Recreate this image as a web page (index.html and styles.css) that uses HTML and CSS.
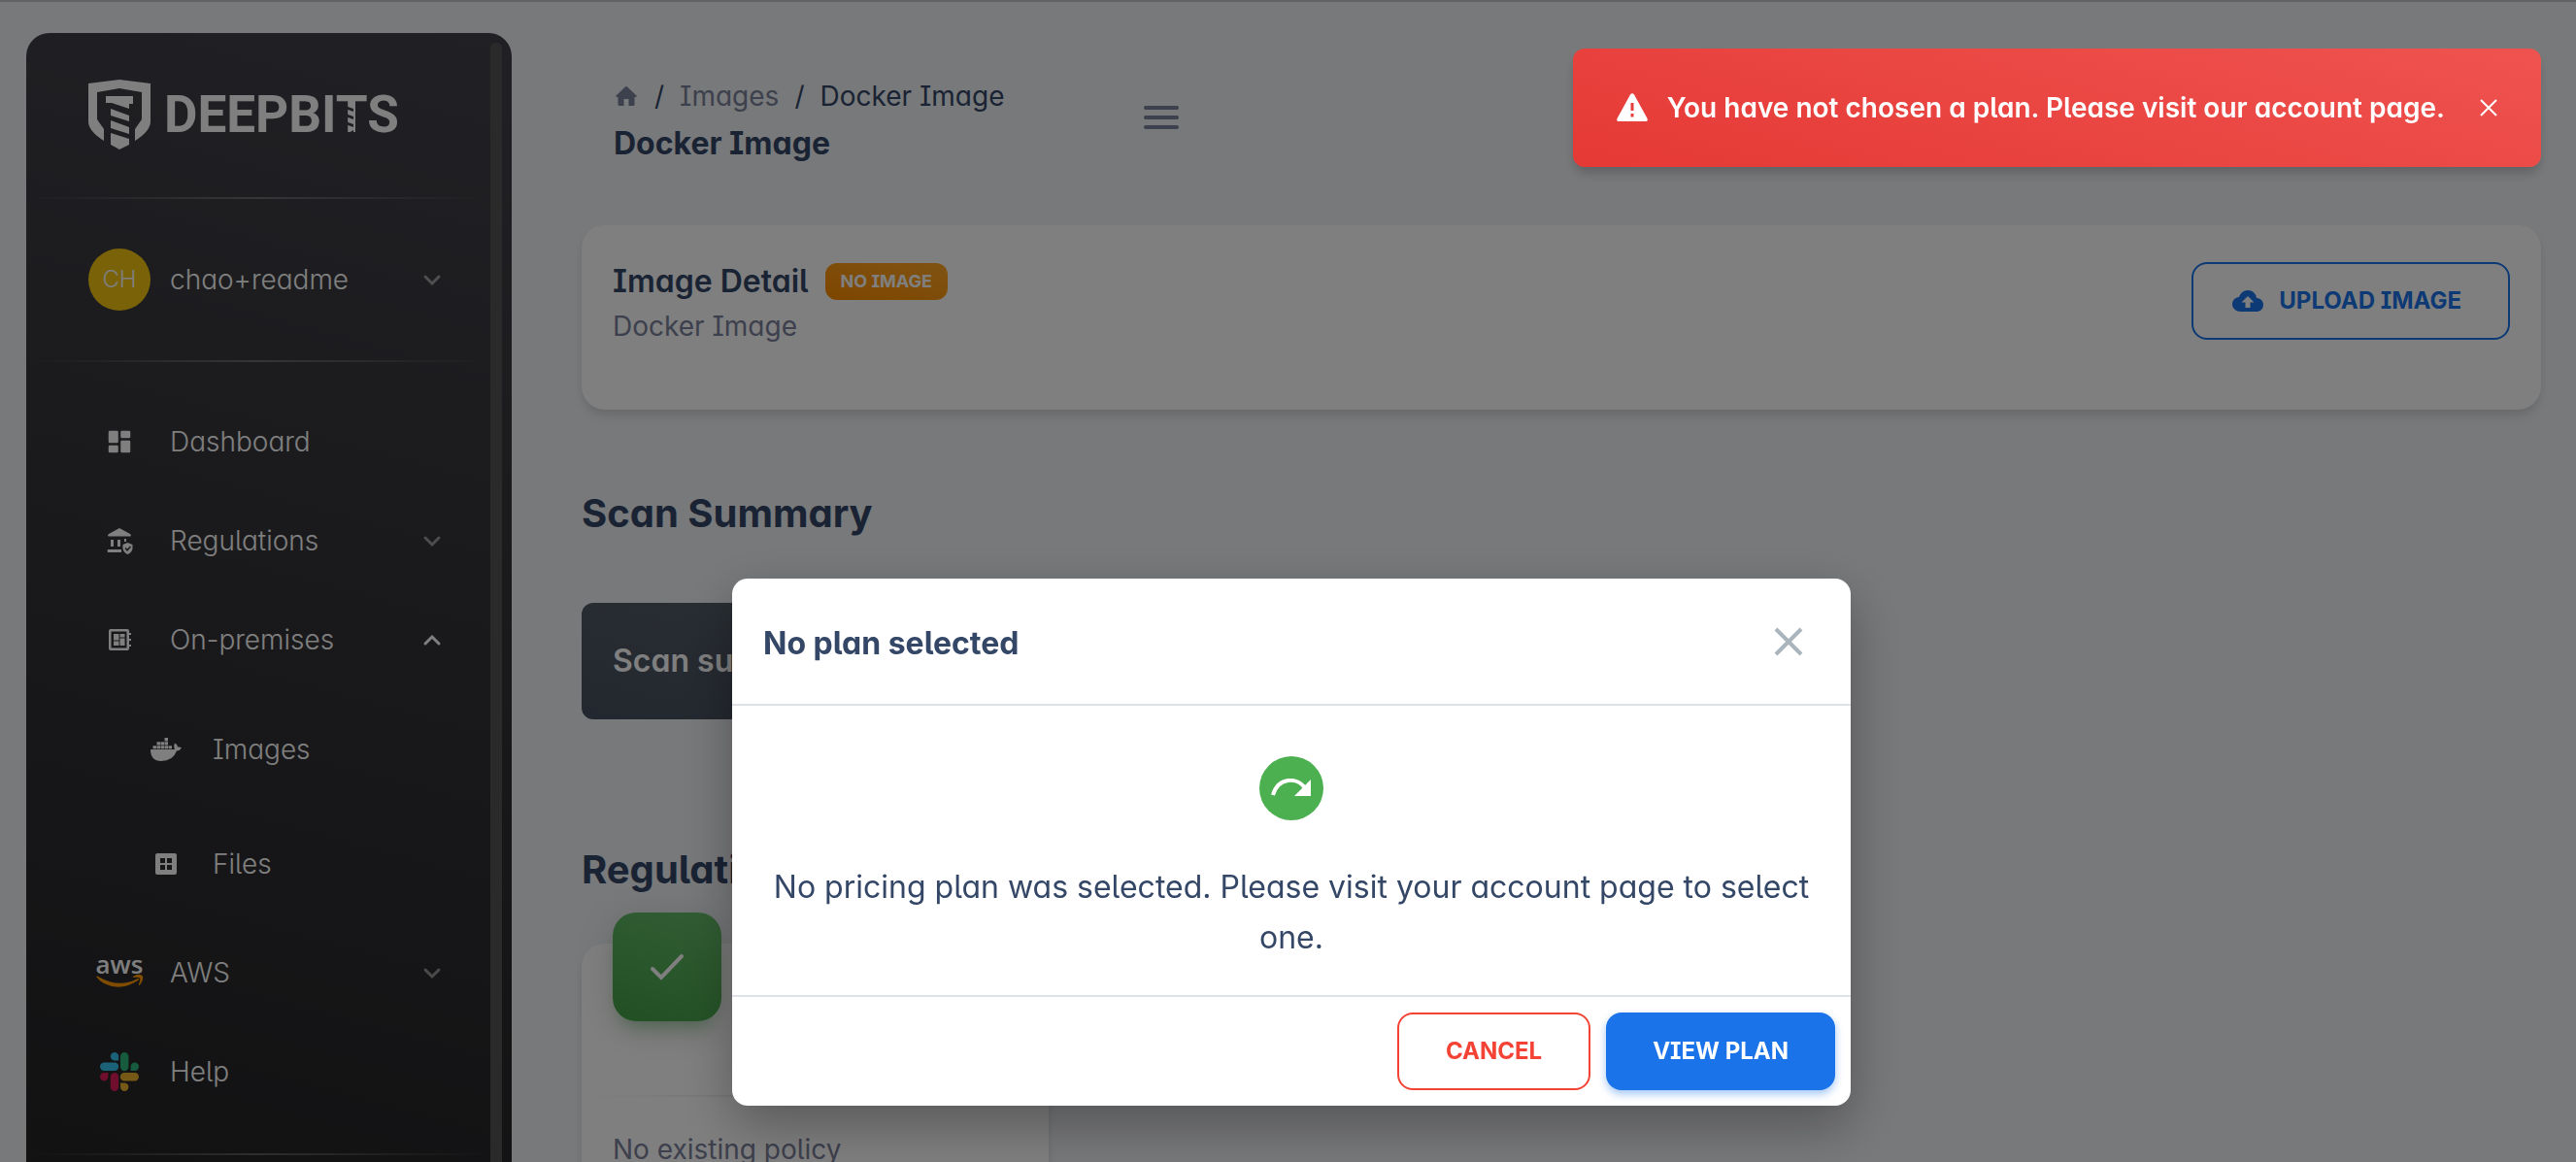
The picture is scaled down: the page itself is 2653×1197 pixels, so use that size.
FILE: index.html
```html
<!DOCTYPE html>
<html lang="en">
    <head>
        <meta charset="utf-8">
        <title>Docker Image</title>
        <link rel="stylesheet" href="styles.css">
    </head>
    <body>
        <aside class="sidebar">
            <div class="sidebar-content">
                <div class="brand">
                    <svg class="brand-shield" viewBox="0 0 64 72">
                        <path d="M32 0 64 4V43Q64 53 48 63V51L55 41V13L32 9 9 13V41L16 51V63Q0 53 0 43V4Z"/>
                        <path d="M18 17H46V25H42V30L24 24H18Z M23 30 42 37V43L23 37Z M23 42 42 49V56L23 50Z M23 55 42 61V67L32 72 23 67Z"/>
                    </svg>
                    <div class="brand-name">DEEPBITS
                        <svg class="brand-screw" viewBox="0 0 14 32">
                            <path d="M0 0 14 5V8L0 3Z M0 8 14 13V16L0 11Z M0 16 14 21V24L0 19Z M0 27 7 31 14 27V32H0Z"/>
                        </svg>
                    </div>
                </div>
                <hr>
                <button class="nav-item user">
                    <span class="avatar">CH</span>
                    <span class="nav-text">chao+readme</span>
                    <svg class="chevron" viewBox="0 0 24 24"><path d="M5 9 12 16 19 9"/></svg>
                </button>
                <hr>
                <nav class="menu">
                    <a class="nav-item" href="#">
                        <span class="nav-icon"><svg width="30" height="30" viewBox="0 0 24 24"><path d="M4 13h6a1 1 0 0 0 1-1V4a1 1 0 0 0-1-1H4a1 1 0 0 0-1 1v8a1 1 0 0 0 1 1zm0 8h6a1 1 0 0 0 1-1v-4a1 1 0 0 0-1-1H4a1 1 0 0 0-1 1v4a1 1 0 0 0 1 1zm10 0h6a1 1 0 0 0 1-1v-8a1 1 0 0 0-1-1h-6a1 1 0 0 0-1 1v8a1 1 0 0 0 1 1zM13 4v4a1 1 0 0 0 1 1h6a1 1 0 0 0 1-1V4a1 1 0 0 0-1-1h-6a1 1 0 0 0-1 1z"/></svg></span>
                        <span class="nav-text">Dashboard</span>
                    </a>
                    <button class="nav-item">
                        <span class="nav-icon"><svg width="28" height="28" viewBox="0 0 28 28"><path d="M14 1 25 7Q27 9 25 9.500H3Q1 9 3 7Z M5 13h3v7H5z M12 13h3v7h-3z M19 12h2v3h-2z M2 23h14v3H2Q1 24.500 2 23Z"/><path fill-rule="evenodd" d="M22.500 16 27.500 18V22Q27 26 22.500 28 18 26 17.500 22V18Z M19.500 22 22 25 26 20.500 25 19.500 22 22.500 20.500 21Z"/></svg></span>
                        <span class="nav-text">Regulations</span>
                        <svg class="chevron" viewBox="0 0 24 24"><path d="M5 9 12 16 19 9"/></svg>
                    </button>
                    <button class="nav-item open">
                        <span class="nav-icon"><svg width="24" height="24" viewBox="0 0 24 24"><path fill-rule="evenodd" d="M3 1h17q2 0 2 2v2h2v2h-2v4h2v2h-2v4h2v2h-2v2q0 2-2 2H3q-2 0-2-2V3q0-2 2-2zM3.500 3.500v17h16v-17z"/><path d="M6 6h5.500v6.500H6z M12.500 6h5v3.500h-5z M6 13.500h5.500V18H6z M12.500 10.500h5V18h-5z"/></svg></span>
                        <span class="nav-text">On-premises</span>
                        <svg class="chevron" viewBox="0 0 24 24"><path d="M5 16 12 9 19 16"/></svg>
                    </button>
                    <div class="submenu">
                        <a class="nav-item" href="#">
                            <span class="nav-icon"><svg width="32" height="24" viewBox="0 0 32 24"><path d="M0 12H25Q23.500 8.500 25 5.500 28 7 28 9.500 30.500 9 32 10.500 30 13.500 27 13.500 23 24 11 24 0 24 0 12Z M2.500 8.300h3.500v3H2.500z M6.500 8.300h3.500v3H6.500z M10.500 8.300h3.500v3h-3.500z M14.500 8.300h3.500v3h-3.500z M18.500 8.300H22v3h-3.500z M6.500 4.300h3.500v3.300H6.500z M10.500 4.300h3.500v3.300h-3.500z M14.500 4.300h3.500v3.300h-3.500z M14.500 0h3.500v3.500h-3.500z"/></svg></span>
                            <span class="nav-text">Images</span>
                        </a>
                        <a class="nav-item" href="#">
                            <span class="nav-icon"><svg width="22" height="22" viewBox="0 0 22 22"><path fill-rule="evenodd" d="M2 0H20Q22 0 22 2V20Q22 22 20 22H2Q0 22 0 20V2Q0 0 2 0Z M5 5V10H10V5Z M12 5V10H17V5Z M5 12V17H10V12Z M12 12V17H17V12Z"/></svg></span>
                            <span class="nav-text">Files</span>
                        </a>
                    </div>
                    <button class="nav-item">
                        <span class="nav-icon">
                            <svg class="aws-logo" width="48" height="32" viewBox="0 0 48 32">
                                <text x="24" y="17" text-anchor="middle">aws</text>
                                <path class="aws-smile" d="M0 20Q1 19 3 20.500 23 32 42 22.500 44 21.500 44.500 23 26 36 8 27 3 24 0 20Z M38 20Q44 16 48 19.500 49 24 44.500 29 43.500 29 44 27.500 46 23 45 21.500 43 20.500 38 21Z"/>
                            </svg>
                        </span>
                        <span class="nav-text">AWS</span>
                        <svg class="chevron" viewBox="0 0 24 24"><path d="M5 9 12 16 19 9"/></svg>
                    </button>
                    <a class="nav-item" href="#">
                        <span class="nav-icon">
                            <svg width="40" height="40" viewBox="0 0 40 40">
                                <path fill="#36c5f0" d="M15 0a4.200 4.200 0 0 0 0 8.400h4.200V4.200A4.200 4.200 0 0 0 15 0z M4.200 10.600H15a4.200 4.200 0 0 1 0 8.400H4.200a4.200 4.200 0 0 1 0-8.400z"/>
                                <path fill="#2eb67d" d="M21 4.200a4.200 4.200 0 0 1 8.400 0V15A4.200 4.200 0 0 1 21 15z M31.600 19v-4.200A4.200 4.200 0 1 1 35.800 19z"/>
                                <path fill="#ecb22e" d="M25 21h10.800a4.200 4.200 0 0 1 0 8.400H25A4.200 4.200 0 0 1 25 21z M21 31.600h4.200a4.200 4.200 0 1 1-4.200 4.200z"/>
                                <path fill="#e01e5a" d="M8.400 21v4.200A4.200 4.200 0 1 1 4.200 21z M10.800 25.200a4.200 4.200 0 0 1 8.400 0v10.600a4.200 4.200 0 0 1-8.400 0z"/>
                            </svg>
                        </span>
                        <span class="nav-text">Help</span>
                    </a>
                </nav>
                <hr>
            </div>
            <div class="scroll-thumb"></div>
        </aside>

        <main class="main">
            <header class="topbar">
                <div class="crumbs">
                    <ol class="breadcrumb">
                        <li><a href="#" aria-label="Home"><svg class="home" viewBox="0 0 22 20"><path d="M10 .5Q11-.4 12 .5L21.500 9.500Q22.500 11 20.500 11H19.500V18.500Q19.500 20 18 20H13.500V13H8.500V20H4Q2.500 20 2.500 18.500V11H1.500Q-.5 11 .5 9.500Z"/></svg></a></li>
                        <li><a href="#">Images</a></li>
                        <li class="active">Docker Image</li>
                    </ol>
                    <h1>Docker Image</h1>
                </div>
                <button class="burger" aria-label="Toggle menu"><i></i><i></i><i></i></button>
            </header>

            <section class="card detail">
                <div>
                    <div class="detail-title">
                        <h2>Image Detail</h2>
                        <span class="badge">NO IMAGE</span>
                    </div>
                    <p>Docker Image</p>
                </div>
                <button class="btn btn-outline-info">
                    <svg width="32" height="24" viewBox="0 0 32 24"><path fill-rule="evenodd" d="M16 1C20.500 1 24.500 4.500 25 9 29 9 32 12 32 16S29 23 25 23H8.500C4 23 0 19.500 0 15.500 0 11.500 3 8.300 7 8 8.500 4 11.500 1 16 1Z M16 7 9.500 13.500H13.500V19H18.500V13.500H22.500Z"/></svg>
                    UPLOAD IMAGE
                </button>
            </section>

            <h3>Scan Summary</h3>
            <div class="scan-bar">Scan summary</div>

            <h3 class="regulations-title">Regulations</h3>
            <section class="card policy">
                <div class="policy-icon">
                    <svg width="36" height="30" viewBox="0 0 36 30"><path d="M3 17 12 26 33 4"/></svg>
                </div>
                <hr>
                <p>No existing policy</p>
            </section>
        </main>

        <div class="backdrop">
            <div class="modal" role="dialog" aria-labelledby="modal-title">
                <div class="modal-header">
                    <h5 id="modal-title">No plan selected</h5>
                    <button class="modal-close" aria-label="Close">
                        <svg width="30" height="30" viewBox="0 0 30 30"><path d="M2 2 28 28 M28 2 2 28"/></svg>
                    </button>
                </div>
                <div class="modal-body">
                    <div class="plan-icon">
                        <svg width="42" height="20" viewBox="0 0 42 20"><path class="arc" d="M2 17C7-1 27-3 36 11"/><path d="M41 1V18H24Z"/></svg>
                    </div>
                    <p>No pricing plan was selected. Please visit your account page to select one.</p>
                </div>
                <div class="modal-footer">
                    <button class="btn btn-outline-danger">CANCEL</button>
                    <button class="btn btn-info">VIEW PLAN</button>
                </div>
            </div>
        </div>

        <div class="toast" role="alert">
            <svg width="32" height="30" viewBox="0 0 32 30"><path fill-rule="evenodd" d="M14 1.500Q16-1 18 1.500L31.500 26Q32.500 29 30 29H2Q-.5 29 .5 26Z M14.500 10V18H17.500V10Z M14.500 21V24.500H17.500V21Z"/></svg>
            <span>You have not chosen a plan. Please visit our account page.</span>
            <button class="toast-close" aria-label="Close">
                <svg width="18" height="18" viewBox="0 0 18 18"><path d="M1 1 17 17 M17 1 1 17"/></svg>
            </button>
        </div>
    </body>
</html>
```

FILE: styles.css
```css
* { box-sizing: border-box; }
body { display: flex; height: 100vh; margin: 0; overflow: hidden; background: #f0f2f5; border-top: 2px solid #c4c4c4; color: #344767; font-family: Inter, "Noto Sans", sans-serif; font-feature-settings: "cv05", "cv08", "cv11"; font-size: 28px; font-weight: 400; line-height: 42px; }
h1, h2, h3, h5, p, ol { margin: 0; padding: 0; }
a { color: inherit; text-decoration: none; }
button { font: inherit; font-feature-settings: inherit; color: inherit; background: none; border: none; padding: 0; cursor: pointer; }
svg { fill: currentColor; flex: none; }

/* sidebar */
.sidebar { display: flex; flex: none; width: 500px; margin: 32px 0 0 27px; color: #fff; background: linear-gradient(195deg, #42424a, #242426); border-radius: 24px 24px 0 0; overflow: hidden; font-weight: 300; }
.sidebar-content { flex: 1; }
.sidebar hr { height: 2px; margin: 0; border: none; background: linear-gradient(90deg, rgba(255,255,255,0), rgba(255,255,255,.25), rgba(255,255,255,0)); }
.scroll-thumb { width: 12px; margin: 10px 10px 0 0; border-radius: 6px 6px 0 0; background: #555; }
.brand { display: flex; align-items: center; gap: 14px; padding: 48px 64px 49px; }
.brand-shield { width: 64px; height: 72px; }
.brand-name { position: relative; font: 700 53px/62px Roboto, sans-serif; }
.brand-screw { position: absolute; left: 181px; top: 20px; width: 14px; height: 32px; fill: #3f3f46; }
.nav-item { display: flex; align-items: center; gap: 20px; width: 100%; height: 102px; padding: 0 48px 0 64px; text-align: left; }
.nav-icon { display: flex; justify-content: center; width: 64px; flex: none; }
.nav-text { flex: 1; }
.user { height: 166px; }
.avatar { width: 64px; height: 64px; border-radius: 50%; background: #f2c40f; font-size: 24px; line-height: 64px; text-align: center; }
.chevron { width: 24px; height: 24px; fill: none; stroke: currentColor; stroke-width: 3; stroke-linecap: round; opacity: .5; }
.open .chevron { opacity: 1; }
.menu { padding: 31px 0 33px; }
.submenu { padding: 3px 0 2px; }
.submenu .nav-item { height: 118px; gap: 16px; padding-left: 112px; }
.aws-logo { overflow: visible; }
.aws-logo text { font: 600 26px "Open Sans", sans-serif; }
.aws-smile { fill: #f90; }

/* page */
.main { flex: 1; padding: 0 36px 0 72px; }
.topbar { display: flex; height: 230px; padding: 75px 33px 0; }
.crumbs { width: 546px; }
.breadcrumb { display: flex; list-style: none; line-height: 44px; color: #7b809a; }
.breadcrumb li { display: flex; align-items: center; }
.breadcrumb li + li::before { content: "/"; padding: 0 16px; color: #344767; }
.breadcrumb .active { color: #344767; }
.home { display: block; width: 26px; height: 20px; }
h1, h2, h5 { font-size: 32px; font-weight: 700; line-height: 54px; }
h3 { margin-top: 81px; font-size: 40px; font-weight: 700; line-height: 52px; }
.burger { display: flex; flex-direction: column; gap: 6px; height: 24px; margin-top: 32px; }
.burger i { width: 36px; height: 4px; border-radius: 2px; background: #7b809a; }
.card { background: #fff; border-radius: 24px; box-shadow: 0 8px 12px -2px rgba(0,0,0,.1), 0 4px 8px -2px rgba(0,0,0,.06); }
.card p { color: #7b809a; }
.detail { display: flex; justify-content: space-between; align-items: flex-start; height: 190px; padding: 38px 32px 0; }
.detail-title { display: flex; align-items: center; gap: 17px; margin-bottom: 5px; }
.detail-title h2 { font-weight: 600; line-height: 40px; }
.badge { padding: 0 16px; border-radius: 12px; color: #fff; background: linear-gradient(195deg, #ffa726, #fb8c00); font-size: 18px; font-weight: 700; line-height: 38px; }
.btn { display: flex; align-items: center; gap: 16px; height: 80px; padding: 0 48px; border: 2px solid; border-radius: 16px; font-size: 24px; font-weight: 700; line-height: 36px; }
.btn-outline-info { padding: 0 48px 0 40px; color: #1a73e8; }
.scan-bar { width: 481px; height: 120px; margin-top: 66px; padding: 0 32px; border-radius: 12px; color: #fff; background: linear-gradient(195deg, #5b656c, #464e5e); font-size: 32px; font-weight: 600; line-height: 120px; }
.regulations-title { margin-top: 129px; }
.policy { position: relative; width: 481px; margin-top: 50px; padding: 156px 32px 32px; }
.policy hr { height: 2px; margin: 0 -32px 33px; border: none; background: linear-gradient(90deg, rgba(0,0,0,0), rgba(0,0,0,.1), rgba(0,0,0,0)); }
.policy-icon { position: absolute; left: 32px; top: -32px; display: flex; align-items: center; justify-content: center; width: 112px; height: 112px; border-radius: 24px; color: #fff; background: linear-gradient(195deg, #66bb6a, #43a047); box-shadow: 0 8px 40px rgba(0,0,0,.14), 0 14px 20px -10px rgba(76,175,80,.5); }
.policy-icon svg { fill: none; stroke: currentColor; stroke-width: 4; stroke-linecap: round; }

/* modal */
.backdrop { position: fixed; inset: 0; display: flex; justify-content: center; align-items: flex-start; padding: 596px 0 0 7px; background: rgba(0,0,0,.5); }
.modal { width: 1152px; background: #fff; border-radius: 16px; box-shadow: 0 20px 54px rgba(0,0,0,.3); }
.modal-header { display: flex; align-items: center; justify-content: space-between; padding: 38px 49px 37px 32px; border-bottom: 2px solid #dee2e6; }
.modal-header h5 { padding-top: 4px; line-height: 50px; }
.modal-close { display: flex; color: #a9b4bd; }
.modal-close path, .toast-close path { fill: none; stroke: currentColor; stroke-width: 4; }
.modal-body { padding: 52px 32px 33px; text-align: center; font-size: 32px; line-height: 52px; }
.plan-icon { display: flex; align-items: center; justify-content: center; width: 66px; height: 66px; margin: 0 auto 43px; border-radius: 50%; color: #fff; background: #4caf50; }
.plan-icon .arc { fill: none; stroke: currentColor; stroke-width: 4; }
.modal-footer { display: flex; justify-content: flex-end; gap: 16px; padding: 16px; border-top: 2px solid #dee2e6; }
.btn-outline-danger { color: #f44335; }
.btn-info { border: none; color: #fff; background: #1a73e8; box-shadow: 0 4px 8px rgba(26,115,232,.4); }

/* toast */
.toast { position: fixed; top: 50px; right: 36px; display: flex; align-items: center; gap: 20px; height: 122px; padding: 0 45px; border-radius: 12px; color: #fff; background: linear-gradient(195deg, #ef5350, #e53935); box-shadow: 0 8px 12px -2px rgba(0,0,0,.2); font-weight: 600; }
.toast-close { display: flex; margin-left: 16px; }
.toast-close path { stroke-width: 2; }
```
